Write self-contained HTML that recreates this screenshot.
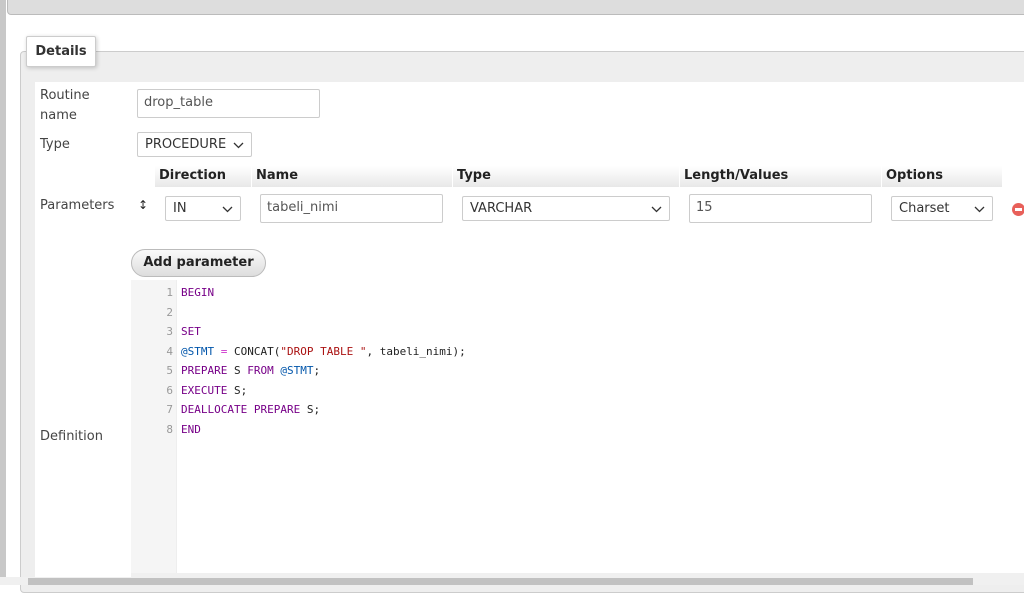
<!DOCTYPE html>
<html><head><style>
body{margin:0;width:1024px;height:585px;overflow:hidden;background:#fff;font-family:"DejaVu Sans","Liberation Sans",sans-serif;font-size:13px;color:#444;position:relative}
.a{position:absolute}
.inp{position:absolute;border:1px solid #ccc;border-radius:2px;background:#fff;box-sizing:border-box;padding-left:6px;line-height:26px;color:#555}
.sel{position:absolute;border:1px solid #ccc;border-radius:2px;background:#fff;box-sizing:border-box;padding-left:7px;line-height:23px;color:#333}
.sel svg{position:absolute;right:7px;top:9px}
th{font-weight:bold}
.hd{position:absolute;top:166px;height:21px;background:linear-gradient(#fff,#e8e8e8);font-weight:bold;color:#222;line-height:20px;padding-left:4px;box-sizing:border-box}
.code{position:absolute;left:181px;font-family:"DejaVu Sans Mono","Liberation Mono",monospace;font-size:11px;line-height:19.5px;color:#222}
.ln{position:absolute;left:131px;width:42px;text-align:right;font-family:"DejaVu Sans Mono",monospace;font-size:11px;line-height:19.5px;color:#999}
.k{color:#708}.v{color:#05a}.s{color:#a11}.o{color:#c3c}
</style></head><body>
<div class="a" style="left:0;top:0;width:6px;height:585px;background:#c8c8c8"></div>
<div class="a" style="left:7px;top:-6px;width:1030px;height:19px;background:#ddd;border:1px solid #bbb;border-radius:4px"></div>
<div class="a" style="left:20px;top:51px;width:1010px;height:540px;border:1px solid #ccc;border-radius:4px;background:#eee"></div>
<div class="a" style="left:35px;top:82px;width:990px;height:495px;background:#fff"></div>
<div class="a" style="left:26px;top:36px;width:68px;height:29px;background:#fff;border:1px solid #ccc;border-radius:2px;box-shadow:1px 1px 4px rgba(0,0,0,.2);font-weight:bold;color:#333;line-height:29px;text-align:center">Details</div>
<div class="a" style="left:40px;top:86px;line-height:20px">Routine<br>name</div>
<div class="inp" style="left:137px;top:89px;width:183px;height:29px">drop_table</div>
<div class="a" style="left:40px;top:137px">Type</div>
<div class="sel" style="left:137px;top:132px;width:115px;height:25px">PROCEDURE<svg width="11" height="7"><path d="M1 1l4.5 4.5L10 1" stroke="#333" fill="none" stroke-width="1.3"/></svg></div>
<div class="hd" style="left:155px;width:96px">Direction</div>
<div class="hd" style="left:252px;width:200px">Name</div>
<div class="hd" style="left:453px;width:226px">Type</div>
<div class="hd" style="left:680px;width:201px">Length/Values</div>
<div class="hd" style="left:882px;width:120px">Options</div>
<div class="a" style="left:40px;top:198px">Parameters</div>
<div class="a" style="left:138px;top:198px;font-size:12px;color:#222">↕</div>
<div class="sel" style="left:165px;top:196px;width:76px;height:25px">IN<svg width="11" height="7"><path d="M1 1l4.5 4.5L10 1" stroke="#333" fill="none" stroke-width="1.3"/></svg></div>
<div class="inp" style="left:260px;top:194px;width:183px;height:29px">tabeli_nimi</div>
<div class="sel" style="left:462px;top:196px;width:208px;height:25px">VARCHAR<svg width="11" height="7"><path d="M1 1l4.5 4.5L10 1" stroke="#333" fill="none" stroke-width="1.3"/></svg></div>
<div class="inp" style="left:689px;top:194px;width:183px;height:29px">15</div>
<div class="sel" style="left:891px;top:196px;width:102px;height:25px">Charset<svg width="11" height="7"><path d="M1 1l4.5 4.5L10 1" stroke="#333" fill="none" stroke-width="1.3"/></svg></div>
<div class="a" style="left:1012px;top:203px;width:13px;height:13px;border-radius:50%;background:#e8605a"><div style="margin:5px 3px;height:3px;background:#fff"></div></div>
<div class="a" style="left:131px;top:249px;width:133px;height:26px;border:1px solid #bbb;border-radius:14px;background:linear-gradient(#fafafa,#ddd);font-weight:bold;color:#222;line-height:26px;text-align:center">Add parameter</div>
<div class="a" style="left:131px;top:280px;width:45px;height:293px;background:#f5f5f5;border-right:1px solid #eee"></div>
<div class="a" style="left:131px;top:573px;width:893px;height:5px;background:#f0f0f0"></div>
<div class="ln" style="top:283px">1<br>2<br>3<br>4<br>5<br>6<br>7<br>8</div>
<div class="code" style="top:283px"><span class="k">BEGIN</span><br><br><span class="k">SET</span><br><span class="v">@STMT</span> <span class="o">=</span> CONCAT(<span class="s">"DROP TABLE "</span>, tabeli_nimi);<br><span class="k">PREPARE</span> S <span class="k">FROM</span> <span class="v">@STMT</span>;<br><span class="k">EXECUTE</span> S;<br><span class="k">DEALLOCATE PREPARE</span> S;<br><span class="k">END</span></div>
<div class="a" style="left:40px;top:429px">Definition</div>
<div class="a" style="left:0;top:577px;width:1024px;height:8px;background:#f0f0f0"></div>
<div class="a" style="left:28px;top:578px;width:945px;height:7px;background:#c1c1c1"></div>
</body></html>
